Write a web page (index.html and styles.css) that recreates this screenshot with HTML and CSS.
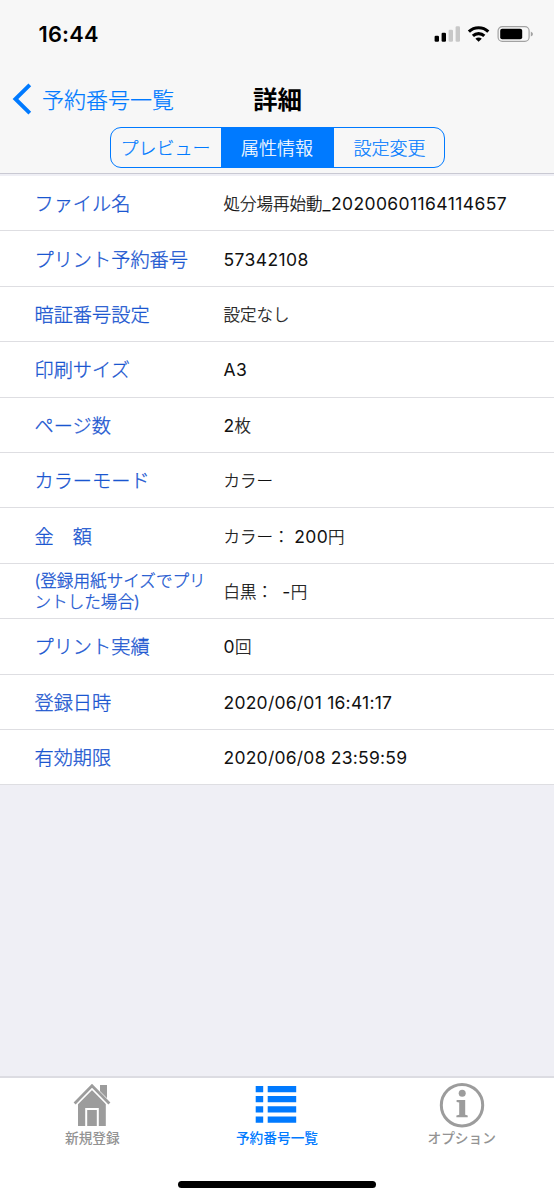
FILE: index.html
```html
<!DOCTYPE html>
<html lang="ja">
<head>
<meta charset="utf-8">
<title>詳細</title>
<link rel="stylesheet" href="styles.css">
</head>
<body>
<div class="screen">
  <header class="header">
    <div class="status">
      <span class="time">16:44</span>
      <svg class="status-icons" width="102" height="20" viewBox="0 0 102 20">
        <rect x="2.6" y="11.8" width="4.4" height="6" rx="1.2"/>
        <rect x="9.6" y="8.8" width="4.4" height="9" rx="1.2"/>
        <g fill="#c8c8c8"><rect x="16.6" y="5.8" width="4.4" height="12" rx="1.2"/><rect x="23.6" y="2.3" width="4.4" height="15.5" rx="1.2"/></g>
        <g fill="none" stroke="#000" stroke-width="3.1"><path d="M36.9 7.6a14 14 0 0 1 19.4 0"/><path d="M40.9 11.9a8.3 8.3 0 0 1 11.4 0"/></g>
        <path d="M43.4 14.7a4.6 4.6 0 0 1 6.4 0L46.6 17.7z"/>
        <rect x="66.1" y="2.6" width="31" height="14.8" rx="4.2" fill="none" stroke="#a2a2a2" stroke-width="1.2"/>
        <rect x="68.2" y="4.7" width="22" height="10.6" rx="2"/>
        <path d="M98.8 7.4q2.2 1 2.2 2.6t-2.2 2.6z" fill="#a2a2a2"/>
      </svg>
    </div>
    <div class="nav">
      <a class="back"><svg width="20" height="32" viewBox="0 0 20 32"><path d="M17.8 1.8 3.4 16l14.4 14.2" fill="none" stroke="#007aff" stroke-width="3.9"/></svg><span>予約番号一覧</span></a>
      <h1 class="title">詳細</h1>
      <span></span>
    </div>
    <div class="segments"><span>プレビュー</span><span class="on">属性情報</span><span>設定変更</span></div>
  </header>
  <main class="content">
    <dl class="list">
      <div class="row"><dt>ファイル名</dt><dd>処分場再始動<span class="num">_20200601164114657</span></dd></div>
      <div class="row"><dt>プリント予約番号</dt><dd><span class="num">57342108</span></dd></div>
      <div class="row"><dt>暗証番号設定</dt><dd>設定なし</dd></div>
      <div class="row"><dt>印刷サイズ</dt><dd><span class="num">A3</span></dd></div>
      <div class="row"><dt>ページ数</dt><dd><span class="num">2</span>枚</dd></div>
      <div class="row"><dt>カラーモード</dt><dd>カラー</dd></div>
      <div class="row"><dt>金　額</dt><dd>カラー： <span class="num">200</span>円</dd></div>
      <div class="row"><dt class="note">(登録用紙サイズでプリ<br>ントした場合)</dt><dd>白黒：&nbsp; <span class="num">-</span>円</dd></div>
      <div class="row"><dt>プリント実績</dt><dd><span class="num">0</span>回</dd></div>
      <div class="row"><dt>登録日時</dt><dd><span class="num date">2020/06/01 16:41:17</span></dd></div>
      <div class="row"><dt>有効期限</dt><dd><span class="num date">2020/06/08 23:59:59</span></dd></div>
    </dl>
  </main>
  <nav class="tabs">
    <a class="tab">
      <svg width="46" height="46" viewBox="0 0 46 46" fill="#9c9c9c">
        <path d="M31 3h7v17l-7-7z"/>
        <path d="M9 21 23 7.5 36.8 21v23h-7V26H16.2v18H9z"/>
        <path d="M18.2 28h9.6v16h-9.6z"/>
        <path d="M6 21.8 23 4.5l17 17.3" fill="none" stroke="#fff" stroke-width="5"/>
        <path d="M5.6 21.4 23 3.8l17.4 17.6" fill="none" stroke="#9c9c9c" stroke-width="2.8"/>
      </svg>
      <span>新規登録</span>
    </a>
    <a class="tab active">
      <svg width="46" height="46" viewBox="0 0 46 46" fill="#007aff">
        <path d="M1.7 4h7.5v6.2H1.7zM13.7 4h28.5v6.2H13.7zM1.7 14.1h7.5v6.2H1.7zM13.7 14.1h28.5v6.2H13.7zM1.7 24.3h7.5v6.2H1.7zM13.7 24.3h28.5v6.2H13.7zM1.7 34.5h7.5v6.2H1.7zM13.7 34.5h28.5v6.2H13.7z"/>
      </svg>
      <span>予約番号一覧</span>
    </a>
    <a class="tab">
      <svg width="46" height="46" viewBox="0 0 46 46" fill="#9c9c9c">
        <circle cx="23" cy="23.2" r="20.7" fill="none" stroke="#9c9c9c" stroke-width="3"/>
        <circle cx="23.2" cy="11.3" r="3.5"/>
        <path d="M17.6 18h8.6v14.8l2.5.6v1.8H17.4v-1.8l2.8-.6V20.5l-2.6-.6z"/>
      </svg>
      <span>オプション</span>
    </a>
  </nav>
  <div class="home-area"><div class="home-bar"></div></div>
</div>
</body>
</html>
```
FILE: styles.css
```css
* { box-sizing: border-box; }
body { margin: 0; font-family: Inter, "Noto Sans CJK JP", sans-serif; color: #111; }
.screen { width: 554px; height: 1200px; display: flex; flex-direction: column; background: #efeff5; overflow: hidden; }
.header { height: 174px; flex: none; background: #f7f7f7; border-bottom: 1px solid #c9c9d3; }
.status { height: 68px; padding: 0 20px 0 38.5px; display: flex; align-items: center; justify-content: space-between; color: #000; }
.time { font-size: 21.8px; font-weight: 600; letter-spacing: 0.2px; }
.nav { height: 59px; padding: 4px 8px 0 9px; display: grid; grid-template-columns: 1fr auto 1fr; align-items: center; }
.back { display: flex; align-items: center; gap: 10px; padding-left: 3px; color: #007aff; font-size: 22px; font-weight: 300; line-height: 32px; -webkit-text-stroke: 0.25px; }
.back svg { margin-top: -1px; }
.title { margin: 0; font-size: 24.5px; font-weight: 700; line-height: 32px; color: #000; }
.segments { width: 335px; height: 41px; margin: 0 auto; display: grid; grid-template-columns: 1fr 113px 1fr; border: 1px solid #007aff; border-radius: 11px; overflow: hidden; color: #007aff; font-size: 18px; font-weight: 300; line-height: 42px; text-align: center; -webkit-text-stroke: 0.2px; }
.segments .on { background: #007aff; color: #fff; }
.segments span:last-child { padding-left: 2px; }
.content { flex: 1; padding-top: 2px; }
.list { margin: 0; height: 609.4px; display: grid; grid-template-rows: repeat(11, 1fr); background: #fff; }
.row { display: grid; grid-template-columns: 189px 1fr; align-items: center; padding: 2px 0 0 34.5px; border-bottom: 1px solid #dedee2; }
.row dt { color: #1a56d0; font-size: 19.2px; font-weight: 300; line-height: 28px; white-space: nowrap; -webkit-text-stroke: 0.3px; }
.row .note { font-size: 16.6px; line-height: 20.5px; }
.row dd { margin: 0; font-size: 16.5px; font-weight: 300; line-height: 26px; white-space: nowrap; -webkit-text-stroke: 0.25px; }
.num { font-size: 17.5px; font-weight: 400; letter-spacing: 0.4px; -webkit-text-stroke: 0 transparent; }
.date { letter-spacing: 0.24px; }
.tabs { height: 94px; flex: none; display: grid; grid-template-columns: repeat(3, 1fr); background: #fff; border-top: 2px solid #dcdce2; padding-top: 4px; }
.tab { display: flex; flex-direction: column; align-items: center; color: #939393; font-size: 13.7px; font-weight: 500; line-height: 20px; }
.tab.active { color: #007aff; }
.home-area { height: 30px; flex: none; background: #fff; padding-top: 11px; }
.home-bar { width: 198px; height: 7px; margin: 0 auto; border-radius: 4px; background: #000; }
```
